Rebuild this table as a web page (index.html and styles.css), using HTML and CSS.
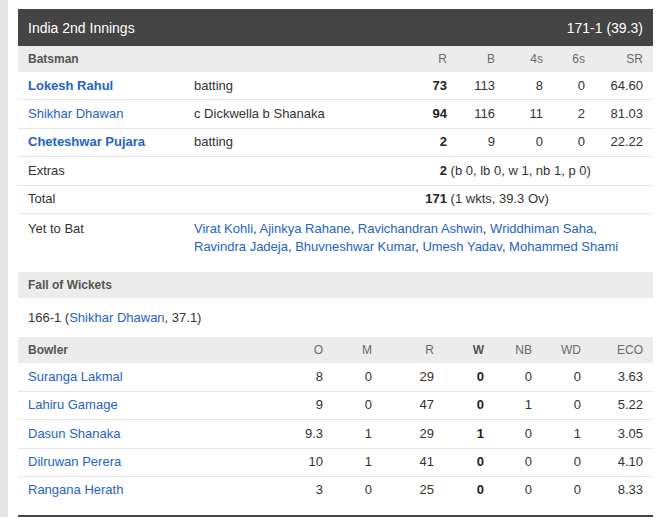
FILE: index.html
```html
<!DOCTYPE html>
<html>
<head>
<meta charset="utf-8">
<link rel="stylesheet" href="styles.css">
</head>
<body>
<div class="strip"></div>
<div class="main">
  <div class="inn-head">
    <span>India 2nd Innings</span>
    <span>171-1 (39.3)</span>
  </div>

  <div class="bat row head">
    <div class="c-name b">Batsman</div>
    <div></div>
    <div class="num">R</div>
    <div class="num">B</div>
    <div class="num">4s</div>
    <div class="num">6s</div>
    <div class="num">SR</div>
  </div>
  <div class="bat row">
    <div class="c-name"><a class="link b">Lokesh Rahul</a></div>
    <div>batting</div>
    <div class="num b dark">73</div>
    <div class="num">113</div>
    <div class="num">8</div>
    <div class="num">0</div>
    <div class="num">64.60</div>
  </div>
  <div class="bat row">
    <div class="c-name"><a class="link">Shikhar Dhawan</a></div>
    <div>c Dickwella b Shanaka</div>
    <div class="num b dark">94</div>
    <div class="num">116</div>
    <div class="num">11</div>
    <div class="num">2</div>
    <div class="num">81.03</div>
  </div>
  <div class="bat row">
    <div class="c-name"><a class="link b">Cheteshwar Pujara</a></div>
    <div>batting</div>
    <div class="num b dark">2</div>
    <div class="num">9</div>
    <div class="num">0</div>
    <div class="num">0</div>
    <div class="num">22.22</div>
  </div>
  <div class="bat row">
    <div class="c-name span2">Extras</div>
    <div class="summary"><span class="sumnum">2</span> (b 0, lb 0, w 1, nb 1, p 0)</div>
  </div>
  <div class="bat row">
    <div class="c-name span2">Total</div>
    <div class="summary"><span class="sumnum">171</span> (1 wkts, 39.3 Ov)</div>
  </div>
  <div class="bat row ytb">
    <div class="c-name">Yet to Bat</div>
    <div class="ytb-list"><a class="link">Virat Kohli</a>, <a class="link">Ajinkya Rahane</a>, <a class="link">Ravichandran Ashwin</a>, <a class="link">Wriddhiman Saha</a>, <a class="link">Ravindra Jadeja</a>, <a class="link">Bhuvneshwar Kumar</a>, <a class="link">Umesh Yadav</a>, <a class="link">Mohammed Shami</a></div>
  </div>

  <div class="sec-head">Fall of Wickets</div>
  <div class="fow">166-1 (<a class="link">Shikhar Dhawan</a>, 37.1)</div>

  <div class="bowl row head">
    <div class="c-name b">Bowler</div>
    <div class="num">O</div>
    <div class="num">M</div>
    <div class="num">R</div>
    <div class="num b">W</div>
    <div class="num">NB</div>
    <div class="num">WD</div>
    <div class="num">ECO</div>
  </div>
  <div class="bowl row">
    <div class="c-name"><a class="link">Suranga Lakmal</a></div>
    <div class="num">8</div><div class="num">0</div><div class="num">29</div><div class="num b dark">0</div><div class="num">0</div><div class="num">0</div><div class="num">3.63</div>
  </div>
  <div class="bowl row">
    <div class="c-name"><a class="link">Lahiru Gamage</a></div>
    <div class="num">9</div><div class="num">0</div><div class="num">47</div><div class="num b dark">0</div><div class="num">1</div><div class="num">0</div><div class="num">5.22</div>
  </div>
  <div class="bowl row">
    <div class="c-name"><a class="link">Dasun Shanaka</a></div>
    <div class="num">9.3</div><div class="num">1</div><div class="num">29</div><div class="num b dark">1</div><div class="num">0</div><div class="num">1</div><div class="num">3.05</div>
  </div>
  <div class="bowl row">
    <div class="c-name"><a class="link">Dilruwan Perera</a></div>
    <div class="num">10</div><div class="num">1</div><div class="num">41</div><div class="num b dark">0</div><div class="num">0</div><div class="num">0</div><div class="num">4.10</div>
  </div>
  <div class="bowl row last">
    <div class="c-name"><a class="link">Rangana Herath</a></div>
    <div class="num">3</div><div class="num">0</div><div class="num">25</div><div class="num b dark">0</div><div class="num">0</div><div class="num">0</div><div class="num">8.33</div>
  </div>

  <div class="inn-head next"></div>
</div>
</body>
</html>
```

FILE: styles.css
```css
html, body {
  margin: 0;
  padding: 0;
  background: #fff;
}
body {
  display: flex;
  font-family: "Liberation Sans", Arial, sans-serif;
  font-size: 13px;
  color: #333;
  height: 517px;
  overflow: hidden;
}
.strip {
  width: 8px;
  flex: none;
  background: #e6e6e6;
}
.main {
  width: 635px;
  padding: 9px 0 0 10px;
}
.inn-head {
  display: flex;
  justify-content: space-between;
  align-items: center;
  height: 37px;
  padding: 0 10px;
  background: #444;
  color: #fff;
  font-size: 14px;
}
.inn-head.next {
  margin-top: 11px;
  height: 4px;
}
.row {
  display: grid;
  border-bottom: 1px solid #e7e7e7;
  line-height: 16.4px;
  padding: 5.5px 0;
}
.bat {
  grid-template-columns: 166px 225px 48px 48px 48px 42px 58px;
}
.bowl {
  grid-template-columns: 265px 50px 49px 62px 50px 48px 49px 62px;
}
.row > div {
  padding: 0 10px;
}
.span2 {
  grid-column: span 2;
}
.num {
  text-align: right;
}
.b {
  font-weight: bold;
}
.dark {
  color: #222;
}
.head {
  background: #ececec;
  border-bottom: none;
  font-size: 12px;
  color: #6a6a6a;
  padding: 5px 0;
  line-height: 16px;
}
.head .b {
  color: #555;
}
.link {
  color: #2563c4;
  text-decoration: none;
}
.row > .summary {
  grid-column: span 5;
  white-space: nowrap;
  padding: 0;
}
.sumnum {
  display: inline-block;
  width: 38px;
  text-align: right;
  font-weight: bold;
  color: #222;
}
.ytb {
  border-bottom: none;
  line-height: 18.4px;
  margin-bottom: 10.5px;
}
.ytb-list {
  grid-column: span 6;
}
.sec-head {
  background: #ececec;
  font-size: 12px;
  font-weight: bold;
  color: #555;
  line-height: 16px;
  padding: 5px 10px;
}
.fow {
  line-height: 16.4px;
  padding: 11.3px 10px;
}
.row.last {
  border-bottom: none;
}
```
